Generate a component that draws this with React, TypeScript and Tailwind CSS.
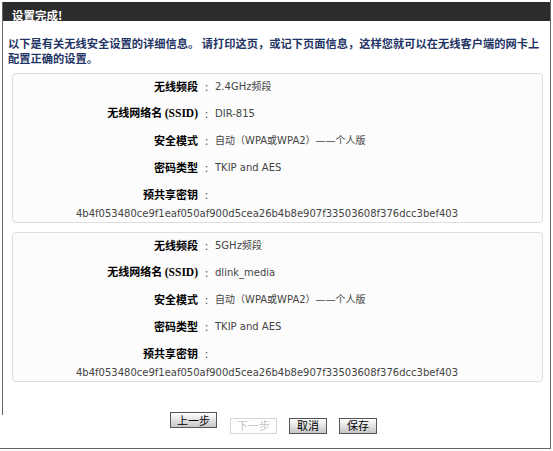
import React from 'react'

const cjk = "font-['Noto_Sans_CJK_SC',sans-serif]"
const val = "font-['DejaVu_Sans','Noto_Sans_CJK_SC',sans-serif]"

type Row = { label: React.ReactNode; value: string }

function Label({ children }: { children: React.ReactNode }) {
  return (
    <div className="flex h-[22px] items-center">
      <div className={`w-[185px] text-right text-[11px] font-bold text-black ${cjk}`}>{children}</div>
      <div className={`w-[17px] text-center text-[11px] text-[#555] ${cjk}`}>:</div>
      <div className="flex-1" />
    </div>
  )
}

function InfoPanel({ band, ssid }: { band: string; ssid: string }) {
  const rows: Row[] = [
    { label: '无线频段', value: band },
    {
      label: (
        <>
          无线网络名 <span className="font-['Liberation_Serif',serif] text-[11.5px]">(SSID)</span>
        </>
      ),
      value: ssid,
    },
    { label: '安全模式', value: '自动（WPA或WPA2）——个人版' },
    { label: '密码类型', value: 'TKIP and AES' },
  ]
  return (
    <div className="h-[150px] rounded-[4px] border border-[#dedede] bg-[#fcfcfc] pt-[1px]">
      <div className="flex flex-col gap-[5px]">
        {rows.map((r, i) => (
          <div key={i} className="flex h-[22px] items-center">
            <div className={`w-[185px] whitespace-nowrap text-right text-[11px] font-bold text-black ${cjk}`}>{r.label}</div>
            <div className={`w-[17px] text-center text-[11px] text-[#555] ${cjk}`}>:</div>
            <div className={`whitespace-nowrap text-[10px] text-[#444] ${val}`}>{r.value}</div>
          </div>
        ))}
        <Label>预共享密钥</Label>
      </div>
      <div className={`flex h-[16px] items-center pl-[63px] text-[10px] text-[#444] ${val}`}>
        4b4f053480ce9f1eaf050af900d5cea26b4b8e907f33503608f376dcc3bef403
      </div>
    </div>
  )
}

function Btn({ children, w, disabled }: { children: React.ReactNode; w: string; disabled?: boolean }) {
  return (
    <button
      disabled={disabled}
      className={`${w} h-[16px] text-[11px] leading-none ${cjk} ${
        disabled
          ? 'border border-[#d4d4d4] bg-white text-[#c4c4c4]'
          : 'border border-[#555] bg-gradient-to-b from-white to-[#c6c6c6] text-black'
      }`}
    >
      {children}
    </button>
  )
}

export default function App() {
  return (
    <div className="h-[451px] w-[553px] overflow-hidden bg-white">
      <div className="flex h-[449px] w-[551px] border-b border-r border-[#666]">
        <div className="ml-[2px] mt-[2px] h-[413px] w-px self-start bg-[#666]" />
        <div className="flex-1">
          <div className="mt-[2px] h-[19px] bg-[#2c2c2c] pl-[9px]">
            <span className={`text-[11.5px] font-bold leading-[19px] text-white ${cjk}`}>设置完成!</span>
          </div>
          <div className={`mt-[15px] whitespace-nowrap pl-[5px] text-[11.25px] font-bold leading-[15px] text-[#1f3566] ${cjk}`}>
            <div>以下是有关无线安全设置的详细信息。 请打印这页，或记下页面信息，这样您就可以在无线客户端的网卡上</div>
            <div>配置正确的设置。</div>
          </div>
          <div className="ml-[9px] mt-[7px] w-[531px]">
            <InfoPanel band="2.4GHz频段" ssid="DIR-815" />
            <div className="mt-[9px]">
              <InfoPanel band="5GHz频段" ssid="dlink_media" />
            </div>
          </div>
          <div className="mt-[30px] flex pl-[167px]">
            <Btn w="w-[47px]">上一步</Btn>
            <div className="ml-[13px]">
              <Btn w="w-[47px]" disabled>
                下一步
              </Btn>
            </div>
            <div className="ml-[12px]">
              <Btn w="w-[38px]">取消</Btn>
            </div>
            <div className="ml-[12px]">
              <Btn w="w-[38px]">保存</Btn>
            </div>
          </div>
        </div>
      </div>
    </div>
  )
}
